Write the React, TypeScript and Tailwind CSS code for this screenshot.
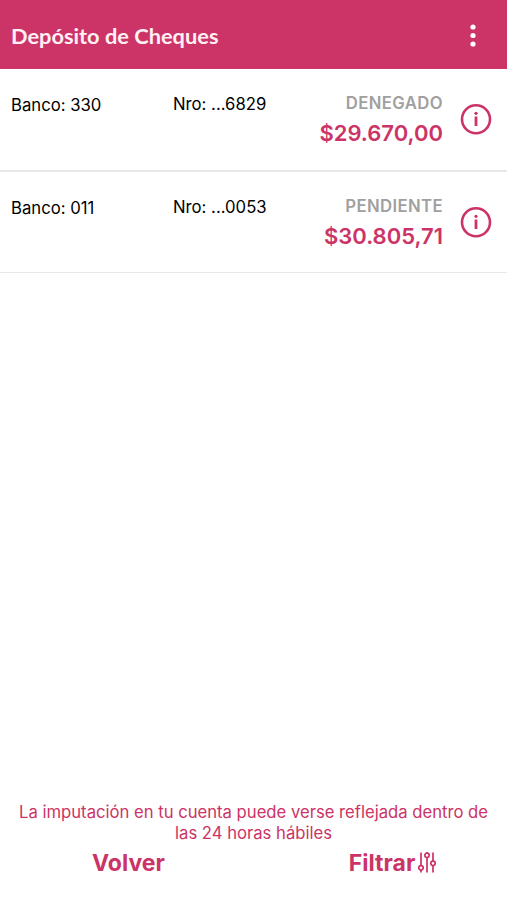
const cheques = [
  { banco: '330', nro: '6829', estado: 'DENEGADO', monto: '$29.670,00' },
  { banco: '011', nro: '0053', estado: 'PENDIENTE', monto: '$30.805,71' },
];

function InfoIcon() {
  return (
    <svg className="w-8 h-8" viewBox="0 0 32 32" fill="none">
      <circle cx="16" cy="16.3" r="14" stroke="#cc3366" strokeWidth="2.6" />
      <circle cx="16" cy="10.3" r="1.6" fill="#cc3366" />
      <path d="M16 13.5v9.5" stroke="#cc3366" strokeWidth="2.8" />
    </svg>
  );
}

function FilterIcon() {
  return (
    <svg className="w-5 h-6" viewBox="0 0 20 24" fill="none" stroke="#cc3366" strokeWidth="1.7">
      <path d="M4 1.5v13M4 19v2.5M10 1v1M10 6.5v15M16 1.5v8.5M16 14.5v7" />
      <circle cx="4" cy="16.8" r="2.2" />
      <circle cx="10" cy="4.3" r="2.2" />
      <circle cx="16" cy="12.3" r="2.2" />
    </svg>
  );
}

export default function App() {
  return (
    <div className="flex flex-col h-screen bg-white text-black font-['Inter',sans-serif] overflow-hidden">
      <header className="flex items-center justify-between h-[69px] shrink-0 bg-[#cc3366] pl-[11px] pr-[31px] pt-0.5">
        <h1 className="pt-px font-['Lato',sans-serif] font-bold text-[21.8px] text-[#fff0f5]">Depósito de Cheques</h1>
        <svg className="w-[6px] h-6" viewBox="0 0 6 24" fill="white">
          <circle cx="3" cy="3" r="2.6" />
          <circle cx="3" cy="11.5" r="2.6" />
          <circle cx="3" cy="20" r="2.6" />
        </svg>
      </header>

      {cheques.map((c) => (
        <div key={c.nro} className="flex h-[103px] last-of-type:h-[101px] shrink-0 border-b-2 last-of-type:border-b border-[#e6e8ea] pl-[11px] pr-[15px] text-[16.7px] leading-5">
          <p className="w-[162px] pt-[26px]">Banco: {c.banco}</p>
          <p className="w-[130px] pt-[25px]">Nro: ...{c.nro}</p>
          <div className="flex-1 pt-6 text-right font-semibold">
            <p className="tracking-[0.4px] text-[#a0a0a0]">{c.estado}</p>
            <p className="mt-1.5 text-[22px] leading-7 text-[#cc3366]">{c.monto}</p>
          </div>
          <div className="pt-[34px] pl-[17px]">
            <InfoIcon />
          </div>
        </div>
      ))}

      <footer className="mt-auto pb-[21px] text-[#cc3366]">
        <p className="mb-[3px] text-center text-[16.65px] leading-[21px] whitespace-nowrap">
          La imputación en tu cuenta puede verse reflejada dentro de
          <br />
          las 24 horas hábiles
        </p>
        <div className="flex text-[23px] font-bold leading-8">
          <button className="w-[257px]">Volver</button>
          <button className="flex flex-1 items-center justify-center gap-0.5 pl-[22px]">
            Filtrar
            <FilterIcon />
          </button>
        </div>
      </footer>
    </div>
  );
}
